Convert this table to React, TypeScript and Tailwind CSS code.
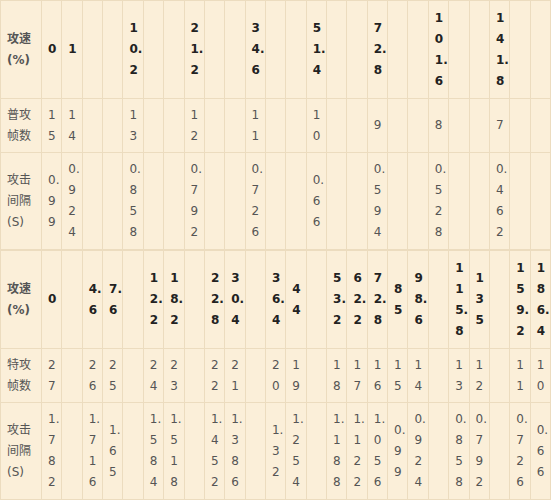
import React from "react";

type Col = { s: string; f: string; t: string };

const t1: Record<number, Col> = {
  0: { s: "0", f: "15", t: "0.99" },
  1: { s: "1", f: "14", t: "0.924" },
  4: { s: "10.2", f: "13", t: "0.858" },
  7: { s: "21.2", f: "12", t: "0.792" },
  10: { s: "34.6", f: "11", t: "0.726" },
  13: { s: "51.4", f: "10", t: "0.66" },
  16: { s: "72.8", f: "9", t: "0.594" },
  19: { s: "101.6", f: "8", t: "0.528" },
  22: { s: "141.8", f: "7", t: "0.462" },
};

const t2: Record<number, Col> = {
  0: { s: "0", f: "27", t: "1.782" },
  2: { s: "4.6", f: "26", t: "1.716" },
  3: { s: "7.6", f: "25", t: "1.65" },
  5: { s: "12.2", f: "24", t: "1.584" },
  6: { s: "18.2", f: "23", t: "1.518" },
  8: { s: "22.8", f: "22", t: "1.452" },
  9: { s: "30.4", f: "21", t: "1.386" },
  11: { s: "36.4", f: "20", t: "1.32" },
  12: { s: "44", f: "19", t: "1.254" },
  14: { s: "53.2", f: "18", t: "1.188" },
  15: { s: "62.2", f: "17", t: "1.122" },
  16: { s: "72.8", f: "16", t: "1.056" },
  17: { s: "85", f: "15", t: "0.99" },
  18: { s: "98.6", f: "14", t: "0.924" },
  20: { s: "115.8", f: "13", t: "0.858" },
  21: { s: "135", f: "12", t: "0.792" },
  23: { s: "159.2", f: "11", t: "0.726" },
  24: { s: "186.4", f: "10", t: "0.66" },
};

const idx = Array.from({ length: 25 }, (_, i) => i);

const cell =
  "border border-[#ecdcbf] px-[6px] py-0 align-middle text-left break-all leading-[21px]";
const lab =
  "border border-[#ecdcbf] px-[6px] py-0 align-middle text-left leading-[21px] text-[#555]";

function Table({ data, label }: { data: Record<number, Col>; label: string }) {
  return (
    <table className="table-fixed border-collapse w-[551px] text-[12px]">
      <colgroup>
        <col className="w-[41px]" />
        {idx.map((i) => (
          <col key={i} />
        ))}
      </colgroup>
      <tbody>
        <tr className="h-[98px]">
          <th className={lab + " font-bold text-[#222]"}>攻速(%)</th>
          {idx.map((i) => (
            <th key={i} className={cell + " font-bold text-[#222]"}>
              {data[i]?.s ?? ""}
            </th>
          ))}
        </tr>
        <tr className="h-[54px]">
          <td className={lab}>{label}</td>
          {idx.map((i) => (
            <td key={i} className={cell + " text-[#555]"}>
              {data[i]?.f ?? ""}
            </td>
          ))}
        </tr>
        <tr className="h-[97px]">
          <td className={lab}>攻击间隔(S)</td>
          {idx.map((i) => (
            <td key={i} className={cell + " text-[#555]"}>
              {data[i]?.t ?? ""}
            </td>
          ))}
        </tr>
      </tbody>
    </table>
  );
}

export default function App() {
  return (
    <div
      className="w-[551px] h-[500px] overflow-hidden bg-[#fdf6ea]"
      style={{ fontFamily: '"DejaVu Sans", "Noto Sans CJK SC", sans-serif' }}
    >
      <div className="bg-[#fbefd9]">
        <Table data={t1} label="普攻帧数" />
        <Table data={t2} label="特攻帧数" />
      </div>
    </div>
  );
}
